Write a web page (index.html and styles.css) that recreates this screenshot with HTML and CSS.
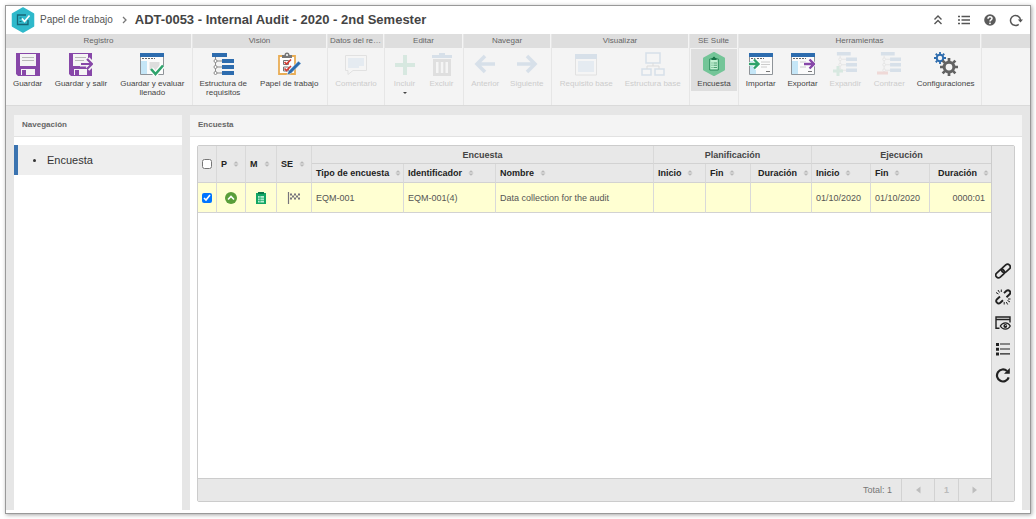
FILE: index.html
```html
<!DOCTYPE html>
<html lang="es">
<head>
<meta charset="utf-8">
<meta name="viewport" content="width=device-width, initial-scale=1">
<title>ADT-0053 - Internal Audit - 2020 - 2nd Semester</title>
<link rel="stylesheet" href="styles.css">
</head>
<body>
<svg class="sprite" aria-hidden="true">
  <symbol id="i-sort" viewBox="0 0 6 8"><path d="M.5 3.500 3 1.200l2.500 2.300zM.5 4.500 3 6.800l2.500-2.300z" fill="#b8b8b8"/></symbol>
  <symbol id="i-floppy" viewBox="0 0 24 24">
    <path d="M0 1h24v23H2l-2-2z" fill="#8747a8"/>
    <path d="M4 2h16v12H4z" fill="#f4f4f4"/><path d="M6 5.500h12M6 8.500h12" stroke="#b9b9b9"/>
    <path d="M5 17h14v6H5z" fill="#f4f4f4"/><path d="M6 18h4v5H6z" fill="#8747a8"/>
  </symbol>
  <symbol id="i-floppy-exit" viewBox="0 0 24 24">
    <path d="M0 1h23v23H2l-2-2z" fill="#8747a8"/>
    <path d="M4 2h15v12H4zM5 17h13v6H5z" fill="#f4f4f4"/>
    <path d="M6 5.500h11M6 8.500h9" stroke="#b9b9b9"/><path d="M6 18h4v5H6z" fill="#8747a8"/>
    <path d="M11 12h13M18.500 7l5 5-5 5" fill="none" stroke="#f4f4f4" stroke-width="5"/>
    <path d="M12 12h11M18 7l5 5-5 5" fill="none" stroke="#8747a8" stroke-width="2.200"/>
  </symbol>
  <symbol id="i-form" viewBox="0 0 24 24">
    <path d="M.5 2h23v20.500H.5z" fill="#fbfbfb" stroke="#8f9499"/><path d="M0 1h24v4H0z" fill="#2d6cae"/>
    <path d="M2 6.500h13" stroke="#666" stroke-dasharray="2 1"/><path d="M1 9h6v13H1z" fill="#c5e6f7"/>
  </symbol>
  <symbol id="i-tree" viewBox="0 0 24 24">
    <path d="M1 1h15v4H1zM11 7h12v4H11zM11 13h12v4H11zM11 19h12v4H11z" fill="#2d6cae"/>
    <path d="M4.500 5v17M5 9h6M5 15h6M5 21h6" stroke="#8b8b8b" fill="none"/>
    <g fill="#fff" stroke="#8b8b8b"><circle cx="4.500" cy="9" r="1.500"/><circle cx="4.500" cy="15" r="1.500"/><circle cx="4.500" cy="21" r="1.500"/></g>
  </symbol>
  <symbol id="i-gear" viewBox="-12 -12 24 24">
    <circle r="6.500" fill="none" stroke="currentColor" stroke-width="4"/>
    <path d="M0-12v4M0 12V8M-12 0h4M12 0H8M-8.500-8.500l3 3M8.500 8.500l-3-3M-8.500 8.500l3-3M8.500-8.500l-3 3" stroke="currentColor" stroke-width="3.600"/>
  </symbol>
</svg>

<div class="window">
  <header class="topbar">
    <svg class="logo" viewBox="0 0 24 26" aria-hidden="true">
      <path d="M12 1 22.500 7v12L12 25 1.500 19V7z" fill="#2fb9cb" stroke="#2fb9cb" stroke-width="1.500" stroke-linejoin="round"/>
      <path d="M15 8H6.500v9.500H17V13" fill="none" stroke="#176778" stroke-width="1.300"/>
      <path d="M8.500 11h2M8.500 14.500h2" stroke="#176778"/><path d="m11 11.500 2.500 3L18.500 8.500" fill="none" stroke="#fff" stroke-width="1.700"/>
    </svg>
    <nav class="crumbs" aria-label="Ruta">
      <a href="#papel">Papel de trabajo</a>
      <svg class="crumb-arrow" viewBox="0 0 5 8" aria-hidden="true"><path d="m1 1 3 3-3 3" fill="none" stroke="#777" stroke-width="1.300"/></svg>
    </nav>
    <h1>ADT-0053 - Internal Audit - 2020 - 2nd Semester</h1>
    <div class="top-actions">
      <button type="button" aria-label="Ocultar"><svg viewBox="0 0 14 14"><path d="M3.500 6.500 7 3l3.500 3.500M3.500 11 7 7.500l3.500 3.500" fill="none" stroke="#555" stroke-width="1.400"/></svg></button>
      <button type="button" aria-label="Lista"><svg viewBox="0 0 14 14"><path d="M1 3.500h2M1 7h2M1 10.500h2M4.500 3.500H13M4.500 7H13M4.500 10.500H13" stroke="#555" stroke-width="1.500"/></svg></button>
      <button type="button" aria-label="Ayuda"><svg viewBox="0 0 14 14"><circle cx="7" cy="7" r="5.800" fill="#5b5b5b"/><path d="M5 5.700C5 3.200 9 3.200 9 5.500 9 7 7 6.800 7 8.500" fill="none" stroke="#fff" stroke-width="1.500"/><circle cx="7" cy="10.300" r=".9" fill="#fff"/></svg></button>
      <button type="button" aria-label="Actualizar"><svg viewBox="0 0 14 14"><path d="M9.700 11.300A5 5 0 1 1 11.500 7" fill="none" stroke="#555" stroke-width="1.500"/><path d="M8.800 6.500h5.200L11.500 9.500z" fill="#555"/></svg></button>
    </div>
  </header>

  <div class="ribbon">
    <section class="group group-registro">
      <h2>Registro</h2>
      <div class="tools">
        <button type="button" class="tool"><svg viewBox="0 0 24 24"><use href="#i-floppy"/></svg><span>Guardar</span></button>
        <button type="button" class="tool"><svg viewBox="0 0 24 24"><use href="#i-floppy-exit"/></svg><span>Guardar y salir</span></button>
        <button type="button" class="tool"><svg viewBox="0 0 24 24"><use href="#i-form"/><path d="M9.500 10h10v8h-10z" fill="#ddd"/><path d="m11 17 4.500 5L23 13.500" fill="none" stroke="#fff" stroke-width="5"/><path d="m11 17 4.500 5L23 13.500" fill="none" stroke="#2fa36c" stroke-width="2.600"/></svg><span>Guardar y evaluar llenado</span></button>
      </div>
    </section>
    <section class="group group-vision">
      <h2>Visión</h2>
      <div class="tools">
        <button type="button" class="tool"><svg viewBox="0 0 24 24"><use href="#i-tree"/></svg><span>Estructura de requisitos</span></button>
        <button type="button" class="tool"><svg viewBox="0 0 24 24"><path d="M2 4h16v18H2z" fill="#fff" stroke="#e9ad55" stroke-width="1.800"/><path d="M5 6V3h2.500a2.500 2.500 0 0 1 5 0H15v3z" fill="#777"/><circle cx="10" cy="3" r="1" fill="#fff"/><path d="M6.500 8.500h5v4h-5zM6.500 15h5v4h-5z" fill="#fff" stroke="#777"/><path d="m7.500 10 2 2L14 7.500M7.500 16.500l2 2L14 14" fill="none" stroke="#d63b32" stroke-width="1.700"/><path d="m10 23 1.500-4L21.500 9l2.500 2.500-10 10z" fill="#2d6cae" stroke="#fff" stroke-width=".5"/></svg><span>Papel de trabajo</span></button>
      </div>
    </section>
    <section class="group group-datos">
      <h2>Datos del re…</h2>
      <div class="tools">
        <button type="button" class="tool" disabled><svg viewBox="0 0 24 24"><path d="M1.500 3.500h21v15H9l-5 4v-4H1.500z" fill="#fff" stroke="#777"/><path d="M4 6h16v8h-5v2H4z" fill="#8db9e4"/></svg><span>Comentario</span></button>
      </div>
    </section>
    <section class="group group-editar">
      <h2>Editar</h2>
      <div class="tools">
        <button type="button" class="tool has-menu" disabled><svg viewBox="0 0 24 24"><path d="M12 3v20M2 13h20" stroke="#2fa36c" stroke-width="4"/></svg><span>Incluir</span><i class="caret"></i></button>
        <button type="button" class="tool" disabled><svg viewBox="0 0 24 24"><path d="M2 3h7V1h6v2h7v3H2z" fill="#2d6cae"/><path d="M3 7h18v17H3z" fill="#666"/><path d="M6 10h2.500v11H6zM10.800 10h2.500v11h-2.500zM15.500 10H18v11h-2.500z" fill="#fff"/></svg><span>Excluir</span></button>
      </div>
    </section>
    <section class="group group-navegar">
      <h2>Navegar</h2>
      <div class="tools">
        <button type="button" class="tool" disabled><svg viewBox="0 0 24 24"><path d="M22 12H4M12 4l-8 8 8 8" fill="none" stroke="#2d6cae" stroke-width="3.500"/></svg><span>Anterior</span></button>
        <button type="button" class="tool" disabled><svg viewBox="0 0 24 24"><path d="M2 12h18M12 4l8 8-8 8" fill="none" stroke="#2d6cae" stroke-width="3.500"/></svg><span>Siguiente</span></button>
      </div>
    </section>
    <section class="group group-visualizar">
      <h2>Visualizar</h2>
      <div class="tools">
        <button type="button" class="tool" disabled><svg viewBox="0 0 24 24"><path d="M1.500 3h21v20h-21z" fill="#fff" stroke="#777"/><path d="M1 2h22v5H1z" fill="#2d6cae"/><path d="M4 9h16v11H4z" fill="#8db9e4"/></svg><span>Requisito base</span></button>
        <button type="button" class="tool" disabled><svg viewBox="0 0 24 24"><path d="M5 1h14v10H5zM1 17h9v6H1zM14 17h9v6h-9z" fill="#fff" stroke="#2d6cae" stroke-width="1.500"/><path d="M12 11v3M6 17v-3h12v3" fill="none" stroke="#555"/></svg><span>Estructura base</span></button>
      </div>
    </section>
    <section class="group group-suite">
      <h2>SE Suite</h2>
      <div class="tools">
        <button type="button" class="tool is-active" aria-pressed="true"><svg viewBox="0 0 24 24"><path d="M12 1 22 6.500v11L12 23 2 17.500v-11z" fill="#74c598" stroke="#74c598" stroke-width="2" stroke-linejoin="round"/><path d="M7.700 7h8.600v11H7.700z" fill="#c3f0d3" stroke="#2b8a5a"/><path d="M9.500 8V6h1.200c.3-1.600 2.300-1.600 2.600 0h1.200v2z" fill="#177447"/><path d="M9.500 11h1M11.500 11h3.500M9.500 13.200h1M11.500 13.200h3.500M9.500 15.500h1M11.500 15.500h3.500" stroke="#2d8b59" stroke-width=".8"/></svg><span>Encuesta</span></button>
      </div>
    </section>
    <section class="group group-herramientas">
      <h2>Herramientas</h2>
      <div class="tools">
        <button type="button" class="tool"><svg viewBox="0 0 24 24"><use href="#i-form"/><path d="M12 10h9M12 12.500h9M12 15h6" stroke="#ccc"/><path d="M17 19.500h4" stroke="#777"/><path d="M0 12h9M5 7.500 9.500 12 5 16.500" fill="none" stroke="#fff" stroke-width="4"/><path d="M0 12h9M5 7.500 9.500 12 5 16.500" fill="none" stroke="#2fa36c" stroke-width="2.400"/></svg><span>Importar</span></button>
        <button type="button" class="tool"><svg viewBox="0 0 24 24"><use href="#i-form"/><path d="M9 10h6M9 15h6" stroke="#ccc"/><path d="M17 19.500h4" stroke="#777"/><path d="M13 12h10M18.500 7.500 23 12l-4.500 4.500" fill="none" stroke="#fff" stroke-width="4"/><path d="M13 12h10M18.500 7.500 23 12l-4.500 4.500" fill="none" stroke="#8747a8" stroke-width="2.400"/></svg><span>Exportar</span></button>
        <button type="button" class="tool" disabled><svg viewBox="0 0 24 24"><use href="#i-tree" x="3" y="-1" width="22" height="22"/><path d="M5 14v10M0 19h10" stroke="#2fa36c" stroke-width="3"/></svg><span>Expandir</span></button>
        <button type="button" class="tool" disabled><svg viewBox="0 0 24 24"><use href="#i-tree" x="3" y="-1" width="22" height="22"/><path d="M0 21h11" stroke="#d63b32" stroke-width="3"/></svg><span>Contraer</span></button>
        <button type="button" class="tool"><svg viewBox="0 0 24 24"><use href="#i-gear" x="0" y="0" width="12" height="12" color="#2d6cae"/><use href="#i-gear" x="6" y="6" width="18" height="18" color="#626262"/></svg><span>Configuraciones</span></button>
      </div>
    </section>
    <section class="group group-rest"><div class="group-fill"></div><div class="tools"></div></section>
  </div>

  <main class="workspace">
    <aside class="panel nav-panel">
      <h2>Navegación</h2>
      <ul>
        <li><a href="#encuesta" aria-current="page">Encuesta</a></li>
      </ul>
    </aside>
    <section class="panel content-panel" id="encuesta">
      <h2>Encuesta</h2>
      <div class="grid-box">
        <div class="grid-main">
          <table>
            <colgroup>
              <col class="c-check"><col class="c-p"><col class="c-m"><col class="c-se">
              <col class="c-tipo"><col class="c-id"><col class="c-nombre">
              <col class="c-start"><col class="c-end"><col class="c-dur">
              <col class="c-date"><col class="c-date"><col class="c-dur">
            </colgroup>
            <thead>
              <tr>
                <th rowspan="2" class="check"><input type="checkbox" aria-label="Seleccionar todo"></th>
                <th rowspan="2"><span class="th">P<svg><use href="#i-sort"/></svg></span></th>
                <th rowspan="2"><span class="th">M<svg><use href="#i-sort"/></svg></span></th>
                <th rowspan="2"><span class="th">SE<svg><use href="#i-sort"/></svg></span></th>
                <th colspan="3" class="span">Encuesta</th>
                <th colspan="3" class="span">Planificación</th>
                <th colspan="3" class="span">Ejecución</th>
              </tr>
              <tr>
                <th><span class="th">Tipo de encuesta<svg><use href="#i-sort"/></svg></span></th>
                <th><span class="th">Identificador<svg><use href="#i-sort"/></svg></span></th>
                <th><span class="th">Nombre<svg><use href="#i-sort"/></svg></span></th>
                <th><span class="th">Inicio<svg><use href="#i-sort"/></svg></span></th>
                <th><span class="th">Fin<svg><use href="#i-sort"/></svg></span></th>
                <th class="tight"><span class="th end">Duración<svg><use href="#i-sort"/></svg></span></th>
                <th><span class="th">Inicio<svg><use href="#i-sort"/></svg></span></th>
                <th><span class="th">Fin<svg><use href="#i-sort"/></svg></span></th>
                <th class="tight"><span class="th end">Duración<svg><use href="#i-sort"/></svg></span></th>
              </tr>
            </thead>
            <tbody>
              <tr>
                <td class="check"><input type="checkbox" checked aria-label="Seleccionar EQM-001"></td>
                <td class="mark"><svg viewBox="0 0 14 14"><circle cx="7" cy="7" r="6" fill="#5a9e3a"/><path d="m4 8.500 3-3 3 3" fill="none" stroke="#fff" stroke-width="1.600"/></svg></td>
                <td class="mark"><svg viewBox="0 0 14 14"><path d="M2 2h10v11H2z" fill="#12a664"/><path d="M4 1h6v2H4z" fill="#087a49"/><path d="M4 5h6v6.500H4z" fill="#b9efd3"/><path d="M4 7.200h6M4 9.400h6M6 5v6.500" stroke="#12a664" stroke-width=".7"/></svg></td>
                <td class="mark"><svg viewBox="0 0 14 14"><path d="M1.500 1v12" stroke="#77747c" stroke-width="1.200"/><path d="M3 2.500h2v2H3zM7 2.500h2v2H7zM11 2.500h2v2h-2zM5 4.500h2v2H5zM9 4.500h2v2H9zM3 6.500h2v2H3zM7 6.500h2v2H7zM11 6.500h2v2h-2z" fill="#77747c"/></svg></td>
                <td>EQM-001</td>
                <td>EQM-001(4)</td>
                <td>Data collection for the audit</td>
                <td></td>
                <td></td>
                <td></td>
                <td>01/10/2020</td>
                <td>01/10/2020</td>
                <td class="num">0000:01</td>
              </tr>
            </tbody>
          </table>
          <footer class="pager">
            <span class="total">Total: 1</span>
            <button type="button" disabled aria-label="Página anterior"><svg viewBox="0 0 6 8"><path d="M5.500.5v7L1 4z" fill="#bdbdbd"/></svg></button>
            <button type="button" disabled class="page">1</button>
            <button type="button" disabled aria-label="Página siguiente"><svg viewBox="0 0 6 8"><path d="M.5.5v7L5 4z" fill="#bdbdbd"/></svg></button>
          </footer>
        </div>
        <div class="rail">
          <button type="button" aria-label="Asociar"><svg viewBox="0 0 16 16"><g fill="none" stroke="#222" stroke-width="1.700" transform="rotate(-42 8 8)"><rect x="-.8" y="5.300" width="9.800" height="5.400" rx="2.700"/><rect x="7" y="5.300" width="9.800" height="5.400" rx="2.700"/></g></svg></button>
          <button type="button" aria-label="Desasociar"><svg viewBox="0 0 16 16"><g fill="none" stroke="#222"><path d="M5 7.500 2 10.200c-2.200 2.300 1 5.500 3.300 3.500L8 11.200M9 4.200 11.200 2c2.500-2.200 5.500 1 3.400 3.300L11.500 8.200" stroke-width="1.900"/><path d="M1 3.500 3.500 5M3 1l1.500 2.500M6.300.5v2.500M15 13l-2.500-1.500M12.700 15.500 11.300 13M9.200 15.500V13M15.500 10H13" stroke-width="1"/></g></svg></button>
          <button type="button" aria-label="Visualizar"><svg viewBox="0 0 16 16"><path d="M4.500 13.300H1V2h14v5.500M1 4.500h14" fill="none" stroke="#222" stroke-width="1.400"/><path d="M5.300 11c2.400-4.300 7.800-4.300 10 0-2.200 4.200-7.600 4.200-10 0z" fill="#e6e6e6" stroke="#222" stroke-width="1.200"/><circle cx="10.300" cy="11" r="1.900" fill="#222"/><circle cx="10.800" cy="10.500" r=".6" fill="#fff"/></svg></button>
          <button type="button" aria-label="Detalles"><svg viewBox="0 0 16 16"><path d="M1 2h3v3H1zM1 6.700h3v3H1zM1 11.400h3v3H1z" fill="#222"/><path d="M5 3h10M5 8h10M5 12.800h10" stroke="#222" stroke-width="1.200"/></svg></button>
          <button type="button" aria-label="Recargar"><svg viewBox="0 0 16 16"><path d="M13.700 10.300A6 6 0 1 1 12 4" fill="none" stroke="#222" stroke-width="2.200"/><path d="M14.800 1v5.800H9z" fill="#222"/></svg></button>
        </div>
      </div>
    </section>
  </main>
</div>
</body>
</html>
```
FILE: styles.css
```css
* { box-sizing: border-box; }

body {
  margin: 0;
  padding: 5px;
  background: #fff;
  color: #444;
  font: 9px/12px "Liberation Sans", Arial, sans-serif;
}

h1, h2, ul { margin: 0; padding: 0; }

button {
  padding: 0;
  border: 0;
  background: none;
  color: inherit;
  font: inherit;
}

a { color: inherit; text-decoration: none; }

svg { display: block; }

.sprite { position: absolute; width: 0; height: 0; }

.window {
  display: flex;
  flex-direction: column;
  min-height: calc(100vh - 10px);
  padding-bottom: 3px;
  border: 1px solid #999;
  background: #fff;
  box-shadow: 1px 1px 4px rgba(0, 0, 0, .35);
}

/* Title bar */
.topbar {
  display: flex;
  align-items: center;
  height: 28px;
  padding: 0 7px 0 5px;
}

.logo { width: 24px; height: 26px; }

.crumbs {
  display: flex;
  align-items: center;
  gap: 9px;
  margin: 0 8px 0 5px;
  color: #555;
  font-size: 10px;
}

.crumb-arrow { width: 5px; height: 8px; }

h1 { font-size: 13px; line-height: 16px; }

.top-actions { display: flex; gap: 12px; margin-left: auto; }
.top-actions svg { width: 14px; height: 14px; }

/* Ribbon */
.ribbon {
  display: flex;
  min-height: 72px;
  border-bottom: 1px solid #dadada;
  background: #f4f4f4;
}

.group {
  display: flex;
  flex-direction: column;
  border-right: 1px solid #e6e6e6;
}

.group h2, .group-fill {
  height: 14px;
  margin-right: 1px;
  background: #dedede;
  color: #666;
  font-size: 8px;
  font-weight: 400;
  line-height: 14px;
  text-align: center;
  white-space: nowrap;
}

.group-registro { width: 187px; }
.group-vision { width: 135px; }
.group-datos { width: 57px; }
.group-editar { width: 79px; }
.group-navegar { width: 88px; }
.group-visualizar { width: 138px; }
.group-suite { width: 49px; }
.group-herramientas { width: 243px; }
.group-rest { flex: 1; border: 0; }
.group-rest .group-fill { margin: 0; }

.tools { display: grid; align-items: start; padding: 1px; }
.group-registro .tools { grid-template-columns: 41fr 65fr 77fr; }
.group-vision .tools { grid-template-columns: 58fr 73fr; }
.group-editar .tools { grid-template-columns: 1fr 1fr; }
.group-navegar .tools { grid-template-columns: 41fr 43fr; }
.group-visualizar .tools { grid-template-columns: 1fr 1fr; }
.group-editar .tools,
.group-navegar .tools,
.group-visualizar .tools { padding-right: 3px; }
.group-herramientas .tools { grid-template-columns: 41fr 42fr 43fr 44fr 68fr; }

.tool {
  display: flex;
  flex-direction: column;
  align-items: center;
  gap: 3px;
  min-height: 42px;
  padding: 3px 0;
  font-size: 8px;
  line-height: 9px;
}

.tool svg { width: 24px; height: 24px; }
.tool span { padding: 0 3px; }
.tool:disabled { color: #ccc; }
.tool:disabled svg { opacity: .14; }
.tool.is-active { background: #dedede; }

.caret {
  margin-top: 1px;
  border: 2px solid transparent;
  border-top-color: #444;
}

/* Workspace */
.workspace {
  display: flex;
  flex: 1;
  gap: 8px;
  padding: 9px 8px 0;
  background: #e6e6e6;
}

.panel { background: #fff; }

.panel > h2 {
  padding: 4px 8px 5px;
  border-bottom: 1px solid #e2e2e2;
  background: #f4f4f4;
  color: #666;
  font-size: 8px;
  line-height: 12px;
}

.nav-panel { width: 168px; }
.nav-panel ul { margin-top: 8px; list-style: none; }

.nav-panel a {
  display: flex;
  align-items: center;
  gap: 11px;
  height: 30px;
  padding-left: 15px;
  border-left: 4px solid #3a73b0;
  background: #eee;
  color: #333;
  font-size: 11px;
}

.nav-panel a::before {
  width: 3px;
  height: 3px;
  border-radius: 50%;
  background: #333;
  content: "";
}

.content-panel {
  display: flex;
  flex: 1;
  flex-direction: column;
  min-width: 0;
}

.grid-box {
  display: flex;
  flex: 1;
  margin: 8px 7px;
  border: 1px solid #ccc;
  border-radius: 2px;
}

.grid-main {
  display: flex;
  flex: 1;
  flex-direction: column;
  min-width: 0;
}

table {
  width: 100%;
  border-collapse: separate;
  border-spacing: 0;
  table-layout: fixed;
}

.c-check { width: 19px; }
.c-p { width: 29px; }
.c-m { width: 31px; }
.c-se { width: 35px; }
.c-tipo, .c-id { width: 92px; }
.c-start { width: 52px; }
.c-end { width: 45px; }
.c-dur { width: 61px; }
.c-date { width: 59px; }

th, td {
  padding: 0 4px;
  border-right: 1px solid #d9d9d9;
  border-bottom: 1px solid #d2d2d2;
  text-align: left;
  white-space: nowrap;
}

th:last-child, td:last-child { border-right: 0; }

th {
  height: 19px;
  background: #e8e8e8;
  color: #222;
}

th.span { height: 18px; color: #444; text-align: center; }
th.tight { padding-right: 2px; }

.th { display: flex; align-items: center; gap: 6px; }
.th.end { justify-content: flex-end; }
.th svg { flex: none; width: 6px; height: 8px; }

td {
  height: 30px;
  background: #ffffd2;
  color: #555;
}

.check { padding: 0; text-align: center; }

.check input {
  display: block;
  width: 10px;
  height: 10px;
  margin: 0 auto;
}

.mark svg { width: 14px; height: 14px; margin: 0 auto; }
td.num { padding-right: 6px; text-align: right; }

.pager {
  display: flex;
  height: 23px;
  margin-top: auto;
  border-top: 1px solid #ccc;
  background: #e8e8e8;
  color: #777;
  line-height: 22px;
}

.total { margin: 0 9px 0 auto; }

.pager button {
  display: grid;
  place-items: center;
  width: 33px;
  border-left: 1px solid #d2d2d2;
  color: #bbb;
}

.pager .page { width: 24px; font-weight: 700; }
.pager svg { width: 6px; height: 8px; }

.rail {
  display: flex;
  flex-direction: column;
  align-items: center;
  justify-content: center;
  gap: 10px;
  width: 23px;
  padding-bottom: 2px;
  border-left: 1px solid #ccc;
  background: #e8e8e8;
}

.rail svg { width: 16px; height: 16px; }
```
